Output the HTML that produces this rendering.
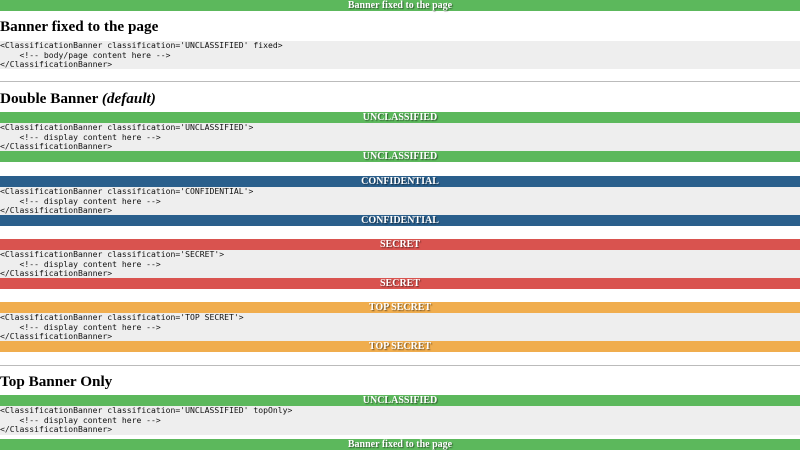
<!DOCTYPE html>
<html><head><meta charset="utf-8"><style>
body{margin:0;width:800px;height:450px;overflow:hidden;background:#fff;position:relative;font-family:"Liberation Serif",serif}
.b{position:absolute;left:0;width:800px;height:11px;line-height:11px;text-align:center;color:#fff;font-weight:bold;font-size:10px;text-shadow:1px 1px 1px rgba(0,0,0,.5)}
.g{background:#5cb85c}.bl{background:#2a5f8c}.r{background:#d9534f}.o{background:#f0ad4e}
pre{position:absolute;left:0;width:800px;margin:0;background:#eee;font-family:"DejaVu Sans Mono",monospace;font-size:8.1px;line-height:9.6px;padding:0;height:28px;color:#111}
h2{position:absolute;left:0;margin:0;font-size:15.2px;font-weight:900;line-height:20px;color:#000}
hr{position:absolute;left:0;width:800px;margin:0;border:0;border-top:1px solid #bbb}
</style></head><body>
<div class="b g" style="top:0">Banner fixed to the page</div>
<h2 style="top:17px">Banner fixed to the page</h2>
<pre style="top:41px;height:28px">&lt;ClassificationBanner classification='UNCLASSIFIED' fixed&gt;
    &lt;!-- body/page content here --&gt;
&lt;/ClassificationBanner&gt;</pre>
<hr style="top:81px">
<h2 style="top:89px">Double Banner <i>(default)</i></h2>
<div class="b g" style="top:112px">UNCLASSIFIED</div>
<pre style="top:123px">&lt;ClassificationBanner classification='UNCLASSIFIED'&gt;
    &lt;!-- display content here --&gt;
&lt;/ClassificationBanner&gt;</pre>
<div class="b g" style="top:151px">UNCLASSIFIED</div>
<div class="b bl" style="top:176px">CONFIDENTIAL</div>
<pre style="top:187px">&lt;ClassificationBanner classification='CONFIDENTIAL'&gt;
    &lt;!-- display content here --&gt;
&lt;/ClassificationBanner&gt;</pre>
<div class="b bl" style="top:215px">CONFIDENTIAL</div>
<div class="b r" style="top:239px">SECRET</div>
<pre style="top:250px">&lt;ClassificationBanner classification='SECRET'&gt;
    &lt;!-- display content here --&gt;
&lt;/ClassificationBanner&gt;</pre>
<div class="b r" style="top:278px">SECRET</div>
<div class="b o" style="top:302px">TOP SECRET</div>
<pre style="top:313px">&lt;ClassificationBanner classification='TOP SECRET'&gt;
    &lt;!-- display content here --&gt;
&lt;/ClassificationBanner&gt;</pre>
<div class="b o" style="top:341px">TOP SECRET</div>
<hr style="top:365px">
<h2 style="top:372px">Top Banner Only</h2>
<div class="b g" style="top:395px">UNCLASSIFIED</div>
<pre style="top:406px;height:29px">&lt;ClassificationBanner classification='UNCLASSIFIED' topOnly&gt;
    &lt;!-- display content here --&gt;
&lt;/ClassificationBanner&gt;</pre>
<div class="b g" style="top:439px">Banner fixed to the page</div>
</body></html>
